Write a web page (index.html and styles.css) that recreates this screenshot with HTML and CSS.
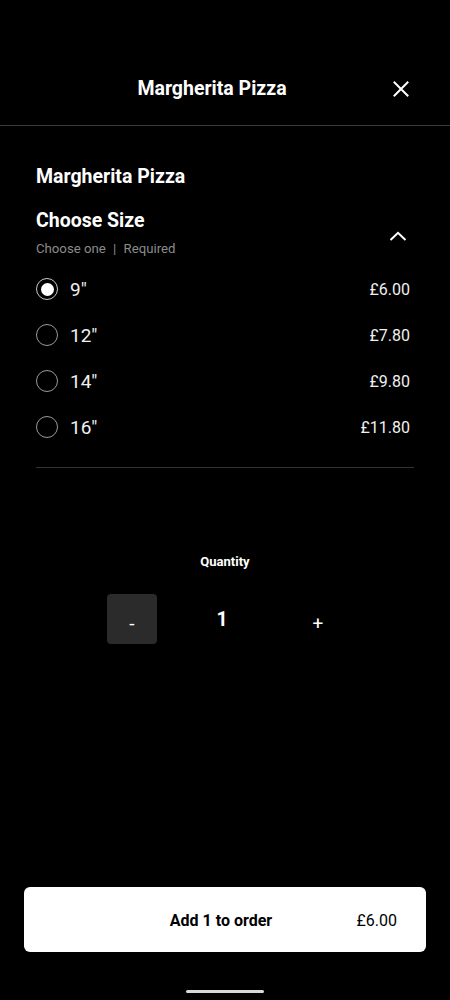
FILE: index.html
```html
<!DOCTYPE html>
<html lang="en">

<head>
    <meta charset="UTF-8">
    <title>Margherita Pizza</title>
    <link rel="stylesheet" href="styles.css">
</head>

<body>
    <div class="sheet">
        <header class="top-bar">
            <span class="top-title">Margherita Pizza</span>
            <button class="close-btn" aria-label="Close">
                <svg width="16" height="16" viewBox="0 0 16 16">
                    <path d="M1.5 1.5 L14.5 14.5 M14.5 1.5 L1.5 14.5" stroke="#fff" stroke-width="2" fill="none" stroke-linecap="square"/>
                </svg>
            </button>
        </header>

        <main class="content">
            <h2 class="item-name">Margherita Pizza</h2>

            <div class="group-head">
                <div>
                    <h3 class="group-title">Choose Size</h3>
                    <div class="group-sub">Choose one <span class="pipe">|</span> Required</div>
                </div>
                <svg class="chevron" width="18" height="10" viewBox="0 0 18 10">
                    <path d="M1.5 9 L9 1.8 L16.5 9" stroke="#fff" stroke-width="2" fill="none"/>
                </svg>
            </div>

            <div class="options">
                <label class="option">
                    <span class="radio checked"></span>
                    <span class="option-name">9"</span>
                    <span class="option-price">£6.00</span>
                </label>
                <label class="option">
                    <span class="radio"></span>
                    <span class="option-name">12"</span>
                    <span class="option-price">£7.80</span>
                </label>
                <label class="option">
                    <span class="radio"></span>
                    <span class="option-name">14"</span>
                    <span class="option-price">£9.80</span>
                </label>
                <label class="option">
                    <span class="radio"></span>
                    <span class="option-name">16"</span>
                    <span class="option-price">£11.80</span>
                </label>
            </div>

            <div class="divider"></div>

            <div class="quantity">
                <div class="quantity-label">Quantity</div>
                <div class="stepper">
                    <button class="step minus">-</button>
                    <span class="count">1</span>
                    <button class="step plus">+</button>
                </div>
            </div>
        </main>

        <footer class="bottom">
            <button class="order-btn">
                <span class="order-label">Add 1 to order</span>
                <span class="order-price">£6.00</span>
            </button>
            <div class="home-bar"></div>
        </footer>
    </div>
</body>

</html>
```

FILE: styles.css
```css
body {
    font-family: Roboto, "Liberation Sans", Arial, sans-serif;
    background-color: #000;
    color: #fff;
    margin: 0;
    padding: 0;
}

button {
    font-family: inherit;
    border: none;
    background: none;
    color: inherit;
    padding: 0;
    cursor: pointer;
}

.sheet {
    height: 1000px;
    display: flex;
    flex-direction: column;
}

.top-bar {
    height: 73px;
    padding: 52px 26px 0 0;
    border-bottom: 1px solid #3a3a3a;
    display: flex;
    align-items: center;
    justify-content: center;
    position: relative;
}

.top-title {
    font-size: 19.5px;
    font-weight: 700;
}

.close-btn {
    position: absolute;
    right: 41px;
    top: 81px;
    width: 16px;
    height: 16px;
    display: flex;
}

.content {
    padding: 0 36px;
    flex: 1;
}

.item-name {
    margin: 39px 0 0;
    font-size: 19.5px;
    line-height: 24px;
    font-weight: 700;
}

.group-head {
    margin-top: 20px;
    display: flex;
    justify-content: space-between;
    align-items: center;
    padding-right: 7px;
}

.group-title {
    margin: 0;
    font-size: 19.5px;
    line-height: 24px;
    font-weight: 700;
}

.group-sub {
    margin-top: 7px;
    font-size: 13.2px;
    line-height: 18px;
    color: #8c8c8c;
}

.pipe {
    margin: 0 4px;
}

.chevron {
    margin-top: 4px;
}

.options {
    margin-top: 8px;
}

.option {
    height: 46px;
    display: flex;
    align-items: center;
    gap: 12px;
    padding-right: 4px;
}

.radio {
    width: 20px;
    height: 20px;
    border: 1px solid #9a9a9a;
    border-radius: 50%;
    display: flex;
    align-items: center;
    justify-content: center;
}

.radio.checked {
    border-color: #c8c8c8;
}

.radio.checked::after {
    content: "";
    width: 13px;
    height: 13px;
    border-radius: 50%;
    background: #fff;
}

.option-name {
    flex: 1;
    font-size: 19px;
    color: #f0f0f0;
}

.option-price {
    font-size: 16px;
    color: #f0f0f0;
}

.divider {
    margin-top: 17px;
    height: 1px;
    background: #333;
}

.quantity {
    margin-top: 86px;
    display: flex;
    flex-direction: column;
    align-items: center;
}

.quantity-label {
    font-size: 13px;
    line-height: 16px;
    font-weight: 700;
}

.stepper {
    margin-top: 24px;
    display: flex;
}

.step,
.count {
    width: 50px;
    height: 50px;
    display: flex;
    align-items: center;
    justify-content: center;
}

.step {
    font-size: 19px;
    padding-top: 8px;
    box-sizing: border-box;
}

.minus {
    background: #2b2b2b;
    border-radius: 4px;
}

.count {
    margin: 0 46px 0 40px;
    font-size: 19.5px;
    font-weight: 700;
}

.bottom {
    display: flex;
    flex-direction: column;
    align-items: center;
    padding-bottom: 7px;
}

.order-btn {
    width: 402px;
    height: 65px;
    background: #fff;
    color: #000;
    border-radius: 6px;
    display: grid;
    grid-template-columns: 1fr auto 1fr;
    align-items: center;
    padding: 2px 29px 0 21px;
    box-sizing: border-box;
}

.order-label {
    grid-column: 2;
    font-size: 16px;
    font-weight: 700;
}

.order-price {
    grid-column: 3;
    justify-self: end;
    font-size: 16px;
}

.home-bar {
    margin-top: 38px;
    width: 78px;
    height: 3px;
    border-radius: 2px;
    background: #d8d8d8;
}
```
